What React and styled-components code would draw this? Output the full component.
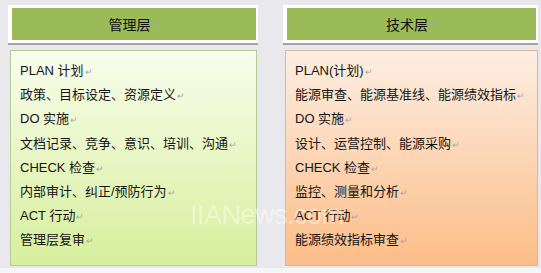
import styled, { createGlobalStyle } from "styled-components";

const GlobalStyle = createGlobalStyle`
  html, body {
    margin: 0;
    padding: 0;
    background: #e9e9ed;
  }
  body {
    font-family: "Liberation Sans", "Noto Sans CJK SC", sans-serif;
  }
`;

const Page = styled.div`
  position: relative;
  width: 541px;
  height: 273px;
  overflow: hidden;
  display: flex;
  gap: 25px;
  padding: 5px 0 0 8px;
  box-sizing: border-box;
`;

const Column = styled.section`
  width: ${(p) => p.$width}px;
  display: flex;
  flex-direction: column;
`;

const Header = styled.div`
  height: 32px;
  border: 3px solid #ffffff;
  border-left-width: 4px;
  border-right-width: 2px;
  background: #9bbb59;
  box-shadow: 0 2px 0 #a4a4a8;
  display: flex;
  align-items: center;
  justify-content: center;
  font-size: 14px;
  color: #111;
`;

const Body = styled.div`
  margin: 7px ${(p) => p.$right}px 0 2px;
  height: 216px;
  box-sizing: border-box;
  border: 1px solid ${(p) => p.$border};
  background: linear-gradient(${(p) => p.$from}, ${(p) => p.$to});
  padding: 8px 0 0 9px;
`;

const Line = styled.div`
  height: 24.2px;
  line-height: 24px;
  font-size: 13px;
  color: #151515;
  white-space: nowrap;
`;

const Mark = styled.span`
  font-size: 9px;
  color: #a8a8a8;
  margin-left: 1px;
`;

const Watermark = styled.div`
  position: absolute;
  left: 190px;
  top: 200px;
  font-size: 27px;
  font-family: "Liberation Sans", sans-serif;
  color: rgba(255, 255, 255, 0.45);
  letter-spacing: -0.5px;
  pointer-events: none;
`;

const Footer = styled.div`
  position: absolute;
  left: 0;
  right: 0;
  top: 268px;
  height: 5px;
  background: #f6f6f6;
`;

const left = [
  "PLAN 计划",
  "政策、目标设定、资源定义",
  "DO 实施",
  "文档记录、竞争、意识、培训、沟通",
  "CHECK 检查",
  "内部审计、纠正/预防行为",
  "ACT 行动",
  "管理层复审",
];

const right = [
  "PLAN(计划)",
  "能源审查、能源基准线、能源绩效指标",
  "DO 实施",
  "设计、运营控制、能源采购",
  "CHECK 检查",
  "监控、测量和分析",
  "ACT 行动",
  "能源绩效指标审查",
];

function Panel({ title, lines, width, right: r, from, to, border }) {
  return (
    <Column $width={width}>
      <Header>
        {title}
        <Mark>↵</Mark>
      </Header>
      <Body $right={r} $from={from} $to={to} $border={border}>
        {lines.map((t) => (
          <Line key={t}>
            {t}
            <Mark>↵</Mark>
          </Line>
        ))}
      </Body>
    </Column>
  );
}

export default function App() {
  return (
    <>
      <GlobalStyle />
      <Page>
        <Panel
          title="管理层"
          lines={left}
          width={250}
          right={1}
          from="#f9fdec"
          to="#d6ef9c"
          border="#b9c99a"
        />
        <Panel
          title="技术层"
          lines={right}
          width={255}
          right={0}
          from="#fdeee2"
          to="#fcbd88"
          border="#d8b89c"
        />
        <Watermark>IIANews.com</Watermark>
        <Footer />
      </Page>
    </>
  );
}
